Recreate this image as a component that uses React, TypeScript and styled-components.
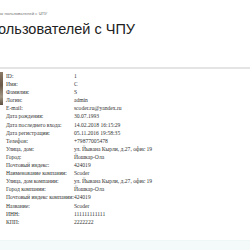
import styled, { createGlobalStyle } from 'styled-components';

const GlobalStyle = createGlobalStyle`
    html, body {
        margin: 0;
        padding: 0;
        background: #ffffff;
        overflow: hidden;
    }
`;

const Page = styled.div`
    width: 250px;
    height: 250px;
    display: flex;
    flex-direction: column;
    overflow: hidden;
    font-family: 'Liberation Sans', Arial, sans-serif;
`;

const Breadcrumb = styled.div`
    margin: 11px 0 0 -31px;
    font-size: 4.3px;
    line-height: 5px;
    color: #777;
    white-space: nowrap;
`;

const Title = styled.h1`
    margin: 5px 0 0 -62px;
    font-size: 14.5px;
    line-height: 17px;
    font-weight: normal;
    color: #222;
    white-space: nowrap;
`;

const Divider = styled.div`
    margin-top: 29px;
    height: 2px;
    background: #e4e4e4;
`;

const Content = styled.div`
    display: flex;
    align-items: flex-start;
    gap: 3px;
    padding-top: 3px;
`;

const Avatar = styled.div`
    width: 3px;
    height: 33px;
    flex-shrink: 0;
    background: linear-gradient(180deg, #8a7a66 0%, #6b5a48 40%, #a29684 75%, #5e4f3f 100%);
`;

const Table = styled.table`
    border-collapse: collapse;
    font-family: 'Liberation Serif', 'Times New Roman', serif;
    font-size: 5.6px;
    color: #333;
`;

const Cell = styled.td<{ $label?: boolean }>`
    padding: 0;
    height: 8.1px;
    line-height: 8.1px;
    white-space: nowrap;
    width: ${(p) => (p.$label ? '64px' : 'auto')};
    vertical-align: middle;
`;

const Footer = styled.div`
    margin-top: auto;
    height: 9px;
    background: #f4fafa;
    border-top: 1px solid #eef6f6;
`;

const rows: [string, string][] = [
    ['ID:', '1'],
    ['Имя:', 'С'],
    ['Фамилия:', 'S'],
    ['Логин:', 'admin'],
    ['E-mail:', 'scoder.ru@yandex.ru'],
    ['Дата рождения:', '30.07.1993'],
    ['Дата последнего входа:', '14.02.2018 16:15:29'],
    ['Дата регистрации:', '05.11.2016 19:58:35'],
    ['Телефон:', '+79877005478'],
    ['Улица, дом:', 'ул. Йывана Кырли, д.27, офис 19'],
    ['Город:', 'Йошкар-Ола'],
    ['Почтовый индекс:', '424019'],
    ['Наименование компании:', 'Scoder'],
    ['Улица, дом компании:', 'ул. Йывана Кырли, д.27, офис 19'],
    ['Город компании:', 'Йошкар-Ола'],
    ['Почтовый индекс компании:', '424019'],
    ['Название:', 'Scoder'],
    ['ИНН:', '111111111111'],
    ['КПП:', '2222222'],
];

export default function App() {
    return (
        <Page>
            <GlobalStyle />
            <Breadcrumb>Главная / Список пользователей с ЧПУ</Breadcrumb>
            <Title>Список пользователей с ЧПУ</Title>
            <Divider />
            <Content>
                <Avatar />
                <Table>
                    <tbody>
                        {rows.map(([label, value], i) => (
                            <tr key={i}>
                                <Cell $label>{label}</Cell>
                                <Cell>{value}</Cell>
                            </tr>
                        ))}
                    </tbody>
                </Table>
            </Content>
            <Footer />
        </Page>
    );
}
